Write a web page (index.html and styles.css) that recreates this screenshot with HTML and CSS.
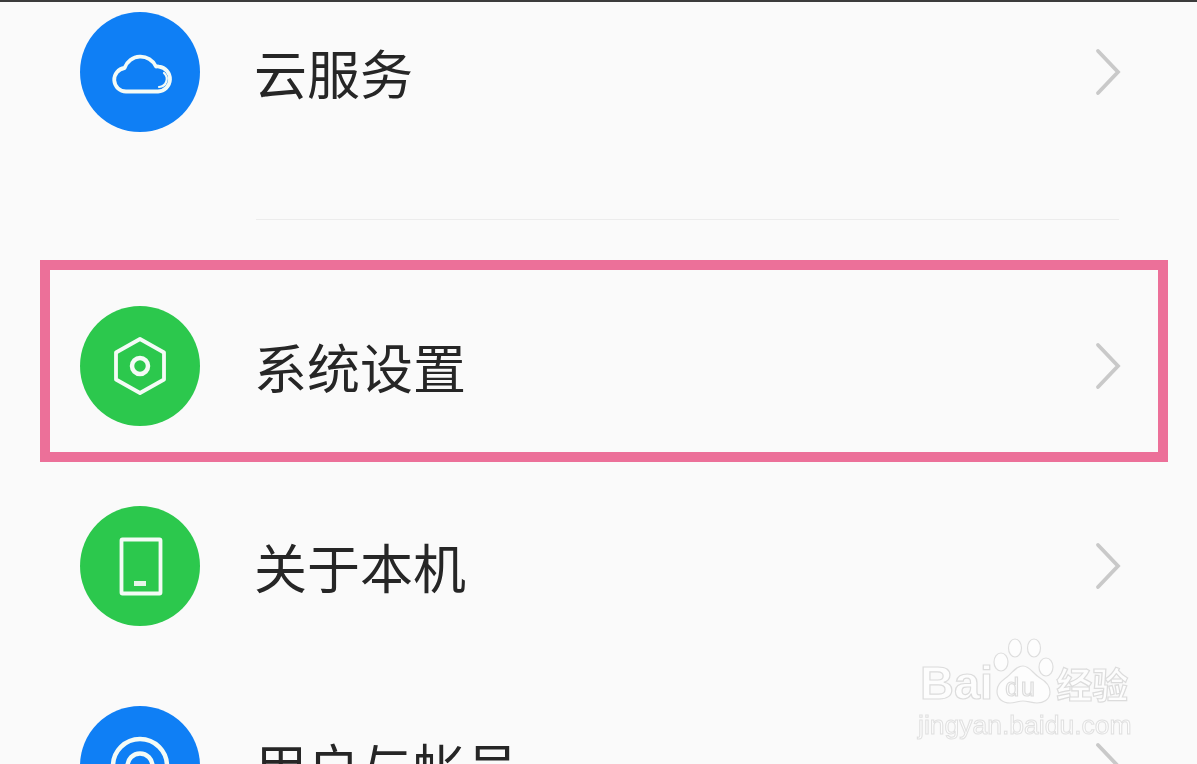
FILE: index.html
```html
<!DOCTYPE html>
<html lang="zh-CN">
<head>
<meta charset="utf-8">
<title>设置</title>
<link rel="stylesheet" href="styles.css">
</head>
<body>
<div class="screen">
  <div class="topbar"></div>
  <ul class="list">
    <li class="row row-first">
      <span class="badge blue">
        <svg class="glyph" viewBox="0 0 120 120"><path d="M46 79.500H78A12.500 12.500 0 0 0 79 54.600A13 13 0 0 0 76 54.500A17 17 0 0 0 44.500 56A11.800 11.800 0 0 0 46 79.500Z"/><path d="M84 61A8 8 0 0 1 79 75" stroke-width="2.200"/></svg>
      </span>
      <span class="label">云服务</span>
      <svg class="chevron" viewBox="0 0 28 48"><path d="M5 3L25 24L5 45"/></svg>
    </li>
    <li class="divider"></li>
    <li class="row">
      <span class="badge green">
        <svg class="glyph" viewBox="0 0 120 120"><path d="M60 33L84 46.500V73.500L60 87L36 73.500V46.500Z"/><circle class="hub" cx="60" cy="60" r="8"/></svg>
      </span>
      <span class="label">系统设置</span>
      <svg class="chevron" viewBox="0 0 28 48"><path d="M5 3L25 24L5 45"/></svg>
      <div class="highlight"></div>
    </li>
    <li class="row">
      <span class="badge green">
        <svg class="glyph" viewBox="0 0 120 120"><rect x="41.500" y="33.500" width="39" height="54" rx="1"/><path class="solid" d="M54 75H66V80H54Z"/></svg>
      </span>
      <span class="label">关于本机</span>
      <svg class="chevron" viewBox="0 0 28 48"><path d="M5 3L25 24L5 45"/></svg>
    </li>
    <li class="row">
      <span class="badge blue">
        <svg class="glyph" viewBox="0 0 120 120"><circle class="hub" cx="60" cy="60" r="27"/><circle class="hub" cx="60" cy="60" r="12.500"/></svg>
      </span>
      <span class="label">用户与帐号</span>
      <svg class="chevron" viewBox="0 0 28 48"><path d="M5 3L25 24L5 45"/></svg>
    </li>
  </ul>
  <div class="watermark">
    <div class="wm-brand">
      <span class="wm-bai">Bai</span>
      <span class="wm-paw">
        <svg class="wm-paw-art" viewBox="0 0 66 72"><ellipse cx="25" cy="14" rx="6.500" ry="9"/><ellipse cx="44" cy="14" rx="6.500" ry="9"/><ellipse cx="11" cy="28" rx="7" ry="9"/><ellipse cx="56" cy="33" rx="7" ry="9"/><path d="M33 32C40 32 43 40 50 44C57 48 60 52 60 58C60 66 53 69 47 69C41 69 38 67 33 67C28 67 25 69 20 69C13 69 7 65 7 57C7 50 12 47 17 43C23 38 26 32 33 32Z"/></svg>
        <span class="wm-du">du</span>
      </span>
      <span class="wm-jy">经验</span>
    </div>
    <div class="wm-url">jingyan.baidu.com</div>
  </div>
</div>
</body>
</html>
```

FILE: styles.css
```css
* { box-sizing: border-box; }
html, body { margin: 0; padding: 0; height: 100%; overflow: hidden; }
body { background: #fafafa; font-family: "Noto Sans CJK SC", "Liberation Sans", sans-serif; }

.screen { position: relative; width: 1197px; height: 764px; overflow: hidden; background: #fafafa; filter: blur(0.45px); }
.topbar { height: 2px; background: #3c3c3c; }

.list { list-style: none; margin: 0; padding: 0; display: flex; flex-direction: column; }

.row {
  position: relative;
  flex: none;
  height: 200px;
  padding: 0 76px 0 80px;
  display: flex;
  align-items: center;
}
.row-first { height: 140px; }

.divider {
  flex: none;
  height: 1px;
  margin: 77px 78px 46px 256px;
  background: #ececec;
}

.badge {
  flex: none;
  width: 120px;
  height: 120px;
  border-radius: 50%;
  display: block;
}
.blue { background: #0f7ff5; }
.green { background: #2cc84d; }

.glyph { display: block; width: 120px; height: 120px; fill: none; stroke: #f4fbf6; stroke-width: 3.800; stroke-linejoin: round; stroke-linecap: round; }
.glyph .solid { fill: #e6f5e9; stroke: none; }
.glyph .hub { stroke-width: 4.500; }

.label {
  flex: 1;
  margin-left: 54px;
  font-size: 53px;
  line-height: 70px;
  font-weight: 400;
  color: #262626;
  white-space: nowrap;
}

.chevron { flex: none; width: 28px; height: 48px; fill: none; stroke: #c9c9c9; stroke-width: 3.800; stroke-linecap: round; stroke-linejoin: miter; }

.highlight {
  position: absolute;
  left: 40px;
  top: -6px;
  width: 1128px;
  height: 202px;
  border: 10px solid #ec7099;
  pointer-events: none;
}

.watermark { position: absolute; left: 918px; top: 636px; width: 220px; font-family: "Liberation Sans", sans-serif; color: #fdfdfd; }
.wm-brand { display: flex; align-items: flex-end; height: 70px; }
.wm-bai { font-size: 47px; line-height: 46px; font-weight: 700; margin-left: 2px; -webkit-text-stroke: 1.200px #dcdcdc; }
.wm-paw { position: relative; display: block; flex: none; width: 66px; height: 72px; margin-left: -3px; }
.wm-paw-art { display: block; width: 66px; height: 72px; fill: #fdfdfd; stroke: #dedede; stroke-width: 1.200; }
.wm-du { position: absolute; left: 15px; top: 41px; font-size: 25px; line-height: 25px; letter-spacing: 2px; -webkit-text-stroke: 1.200px #dcdcdc; }
.wm-jy { font-family: "Noto Sans CJK SC", sans-serif; font-size: 36px; line-height: 46px; font-weight: 700; -webkit-text-stroke: 1.200px #dcdcdc; }
.wm-url { margin-top: 5px; font-size: 26.500px; line-height: 28px; white-space: nowrap; -webkit-text-stroke: 1px #e0e0e0; }
```
